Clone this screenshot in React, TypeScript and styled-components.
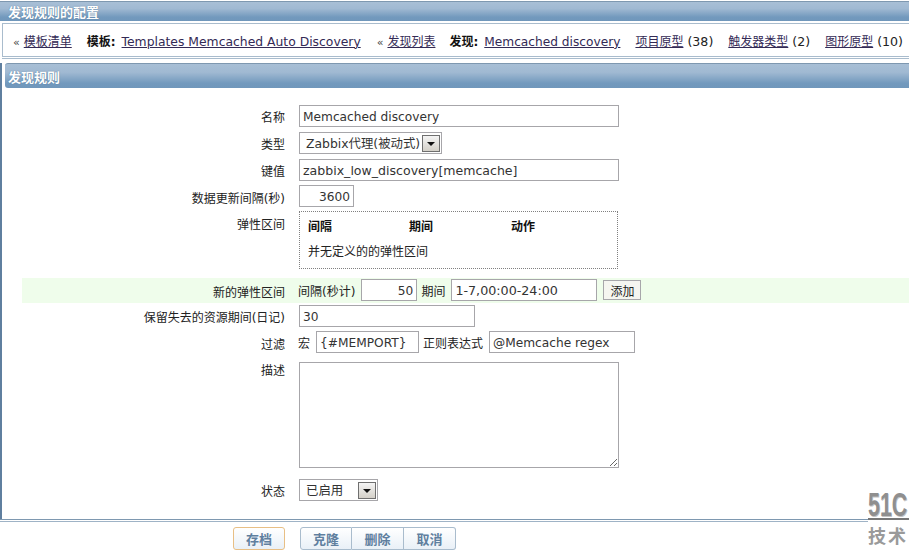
import styled, { createGlobalStyle } from 'styled-components';

const GlobalStyle = createGlobalStyle`
    html, body {
        margin: 0;
        padding: 0;
        background: #ffffff;
    }
    body {
        width: 909px;
        height: 555px;
        overflow: hidden;
        font-family: "DejaVu Sans", "Noto Sans CJK SC", sans-serif;
        font-size: 12px;
        color: #222222;
    }
`;

const Page = styled.div`
    position: relative;
    width: 909px;
    height: 555px;
    padding-top: 1px;
    box-sizing: border-box;
    overflow: hidden;
`;

const HeaderBar = styled.div<{ $height: number; $inset: number; $pad: number }>`
    height: ${(p) => p.$height}px;
    margin-left: ${(p) => p.$inset}px;
    padding-left: ${(p) => p.$pad}px;
    box-sizing: border-box;
    display: flex;
    align-items: center;
    font-family: "Noto Sans CJK SC", sans-serif;
    font-weight: 700;
    font-size: 13px;
    color: #ffffff;
    text-shadow: 0 0 1px #45688a;
    background: linear-gradient(to bottom, #a8bfd6 0%, #a0b9d2 35%, #7299bd 80%, #7097bb 100%);
    border-top: 1px solid #7e98b0;
    border-radius: ${(p) => (p.$inset ? '3px 0 0 3px' : '0')};
`;

const Nav = styled.div`
    margin: 2px 0 0 2px;
    height: 34px;
    box-sizing: border-box;
    display: flex;
    align-items: center;
    padding: 0 0 0 10px;
    border: 1px solid #a9bccd;
    border-right: none;
    white-space: nowrap;
`;

const NavItem = styled.span<{ $left: number }>`
    margin-left: ${(p) => p.$left}px;
    display: inline-flex;
    align-items: baseline;
    gap: 4px;
    font-size: 12.6px;
    color: #222222;
`;

const Crumb = styled.span`
    font-size: 11px;
    color: #444444;
`;

const NavLink = styled.a<{ $size?: number }>`
    color: #332a55;
    text-decoration: underline;
    font-size: ${(p) => p.$size ?? 12}px;
`;

const Strong = styled.b`
    font-weight: 700;
    font-size: 12px;
    color: #111111;
    padding-right: 2px;
`;

const Divider = styled.div`
    margin: 1px 0 4px 2px;
    height: 0;
    border-top: 1px solid #a9bccd;
`;

const Section = styled.div`
    border-left: 2px solid #5f7f9f;
    height: 457px;
    padding-left: 2px;
    box-sizing: border-box;
`;

const Form = styled.div`
    padding: 17px 0 0 18px;
`;

const Row = styled.div<{ $top: number; $green?: boolean }>`
    display: grid;
    grid-template-columns: 263px 1fr;
    column-gap: 14px;
    margin-top: ${(p) => p.$top}px;
    background: ${(p) => (p.$green ? '#effdeb' : 'transparent')};
    padding: ${(p) => (p.$green ? '1px 0 2px' : '0')};
`;

const Label = styled.div<{ $pad?: number }>`
    text-align: right;
    font-size: 12px;
    line-height: 16px;
    padding-top: ${(p) => p.$pad ?? 5}px;
    color: #222222;
`;

const Field = styled.div`
    display: flex;
    align-items: center;
    height: 22px;
    font-size: 12px;
    color: #222222;
`;

const Input = styled.input<{ $width: number; $right?: boolean; $size?: number }>`
    width: ${(p) => p.$width}px;
    height: 22px;
    box-sizing: border-box;
    border: 1px solid #a7a6aa;
    padding: 1px 3px 0;
    margin: 0;
    font-family: "DejaVu Sans", "Noto Sans CJK SC", sans-serif;
    font-size: ${(p) => p.$size ?? 12.2}px;
    color: #333333;
    background: #ffffff;
    text-align: ${(p) => (p.$right ? 'right' : 'left')};
    outline: none;
`;

const Select = styled.div<{ $width: number }>`
    width: ${(p) => p.$width}px;
    height: 22px;
    box-sizing: border-box;
    border: 1px solid #a7a6aa;
    display: flex;
    align-items: center;
    justify-content: space-between;
    padding: 0 1px 0 6px;
    font-size: 12.4px;
    color: #333333;
    white-space: nowrap;
`;

const SelectArrow = styled.span`
    width: 18px;
    height: 17px;
    box-sizing: border-box;
    border: 1px solid #6f6f6f;
    background: linear-gradient(to bottom, #f4f4f4, #d4d0c8);
    display: flex;
    align-items: center;
    justify-content: center;
    flex-shrink: 0;

    &::after {
        content: '';
        margin-top: 2px;
        border-left: 4px solid transparent;
        border-right: 4px solid transparent;
        border-top: 4px solid #111111;
    }
`;

const PeriodBox = styled.div`
    width: 319px;
    height: 58px;
    box-sizing: border-box;
    border: 1px dotted #808080;
    padding: 7px 8px 0;
`;

const PeriodHead = styled.div`
    display: grid;
    grid-template-columns: 101px 102px 1fr;
    font-weight: 700;
    font-size: 12px;
    line-height: 16px;
    color: #111111;
`;

const PeriodEmpty = styled.div`
    margin-top: 9px;
    font-size: 12px;
    line-height: 16px;
`;

const Text = styled.span<{ $left?: number; $right?: number }>`
    margin-left: ${(p) => p.$left ?? 0}px;
    margin-right: ${(p) => p.$right ?? 0}px;
    white-space: nowrap;
`;

const SmallButton = styled.button`
    margin-left: 6px;
    width: 38px;
    height: 20px;
    padding: 0;
    box-sizing: border-box;
    border: 1px solid #a7a6aa;
    background: #f5f5f0;
    font-family: "Noto Sans CJK SC", sans-serif;
    font-size: 12px;
    color: #222222;
`;

const TextArea = styled.textarea`
    display: block;
    width: 320px;
    height: 106px;
    box-sizing: border-box;
    border: 1px solid #a7a6aa;
    margin: 0;
    padding: 2px;
    outline: none;
`;

const Footer = styled.div`
    margin: 18px 0 0 -4px;
    border-top: 1px solid #7e98b0;
    border-bottom: 1px solid #9fb3c6;
    height: 3px;
    box-sizing: border-box;
`;

const Actions = styled.div`
    display: flex;
    padding: 7px 0 0 233px;
`;

const ActionGroup = styled.div`
    display: flex;
    margin-left: 15px;
`;

const ActionButton = styled.button<{ $accent?: boolean; $pos?: 'first' | 'mid' | 'last' }>`
    width: 52px;
    height: 23px;
    padding: 0;
    box-sizing: border-box;
    font-family: "Noto Sans CJK SC", sans-serif;
    font-weight: 700;
    font-size: 13px;
    color: #5f7f9f;
    background: linear-gradient(to bottom, #ffffff, #e9f0f7);
    border: 1px solid ${(p) => (p.$accent ? '#e8bf85' : '#a9bccd')};
    border-left-width: ${(p) => (p.$pos === 'mid' || p.$pos === 'last' ? 0 : 1)}px;
    border-radius: ${(p) =>
        p.$pos === 'first' ? '3px 0 0 3px' : p.$pos === 'last' ? '0 3px 3px 0' : p.$pos === 'mid' ? '0' : '3px'};
`;

const Watermark = styled.div`
    position: absolute;
    left: 868px;
    top: 489px;
    width: 41px;
    white-space: nowrap;
    background: #ffffff;
    color: #9a9a9a;
    font-weight: 700;
`;

const WatermarkTop = styled.div`
    height: 29px;
    border-bottom: 2px solid #777777;
`;

const WatermarkGlyphs = styled.span`
    display: block;
    width: 70px;
    font-family: "Liberation Sans", sans-serif;
    font-size: 34px;
    line-height: 30px;
    color: #8f8f8f;
    text-shadow: 1px 1px 0 #c4c4c4;
    transform: scaleX(0.63);
    transform-origin: left center;
`;

const WatermarkBottom = styled.div`
    font-family: "Noto Sans CJK SC", sans-serif;
    font-size: 18px;
    line-height: 24px;
    letter-spacing: 2px;
    padding-top: 3px;
`;

export default function App() {
    return (
        <Page>
            <GlobalStyle />
            <HeaderBar $height={20} $inset={0} $pad={8}>发现规则的配置</HeaderBar>
            <Nav>
                <NavItem $left={0}>
                    <Crumb>«</Crumb>
                    <NavLink>模板清单</NavLink>
                </NavItem>
                <NavItem $left={15}>
                    <Strong>模板:</Strong>
                    <NavLink $size={12.36}>Templates Memcached Auto Discovery</NavLink>
                </NavItem>
                <NavItem $left={16}>
                    <Crumb>«</Crumb>
                    <NavLink>发现列表</NavLink>
                </NavItem>
                <NavItem $left={14}>
                    <Strong>发现:</Strong>
                    <NavLink $size={12.2}>Memcached discovery</NavLink>
                </NavItem>
                <NavItem $left={15}>
                    <NavLink>项目原型</NavLink> (38)
                </NavItem>
                <NavItem $left={15}>
                    <NavLink>触发器类型</NavLink> (2)
                </NavItem>
                <NavItem $left={15}>
                    <NavLink>图形原型</NavLink> (10)
                </NavItem>
            </Nav>
            <Divider />
            <Section>
                <HeaderBar $height={25} $inset={1} $pad={3}>发现规则</HeaderBar>
                <Form>
                    <Row $top={0}>
                        <Label>名称</Label>
                        <Field><Input $width={320} defaultValue="Memcached discovery" /></Field>
                    </Row>
                    <Row $top={5}>
                        <Label>类型</Label>
                        <Field>
                            <Select $width={143}>Zabbix代理(被动式)<SelectArrow /></Select>
                        </Field>
                    </Row>
                    <Row $top={5}>
                        <Label>键值</Label>
                        <Field><Input $width={320} $size={12.55} defaultValue="zabbix_low_discovery[memcache]" /></Field>
                    </Row>
                    <Row $top={4}>
                        <Label $pad={6}>数据更新间隔(秒)</Label>
                        <Field><Input $width={55} $right defaultValue="3600" /></Field>
                    </Row>
                    <Row $top={4}>
                        <Label $pad={6}>弹性区间</Label>
                        <PeriodBox>
                            <PeriodHead>
                                <span>间隔</span>
                                <span>期间</span>
                                <span>动作</span>
                            </PeriodHead>
                            <PeriodEmpty>并无定义的的弹性区间</PeriodEmpty>
                        </PeriodBox>
                    </Row>
                    <Row $top={9} $green>
                        <Label $pad={6}>新的弹性区间</Label>
                        <Field>
                            <Text $left={-1} $right={6}>间隔(秒计)</Text>
                            <Input $width={56} $right defaultValue="50" />
                            <Text $left={4} $right={6}>期间</Text>
                            <Input $width={146} $size={12.7} defaultValue="1-7,00:00-24:00" />
                            <SmallButton>添加</SmallButton>
                        </Field>
                    </Row>
                    <Row $top={2}>
                        <Label>保留失去的资源期间(日记)</Label>
                        <Field><Input $width={176} defaultValue="30" /></Field>
                    </Row>
                    <Row $top={4}>
                        <Label $pad={6}>过滤</Label>
                        <Field>
                            <Text $left={-1} $right={6}>宏</Text>
                            <Input $width={103} defaultValue="{#MEMPORT}" />
                            <Text $left={4} $right={6}>正则表达式</Text>
                            <Input $width={146} defaultValue="@Memcache regex" />
                        </Field>
                    </Row>
                    <Row $top={9}>
                        <Label $pad={1}>描述</Label>
                        <TextArea />
                    </Row>
                    <Row $top={11}>
                        <Label>状态</Label>
                        <Field>
                            <Select $width={79}>已启用<SelectArrow /></Select>
                        </Field>
                    </Row>
                </Form>
                <Footer />
            </Section>
            <Actions>
                <ActionButton $accent>存档</ActionButton>
                <ActionGroup>
                    <ActionButton $pos="first">克隆</ActionButton>
                    <ActionButton $pos="mid">删除</ActionButton>
                    <ActionButton $pos="last">取消</ActionButton>
                </ActionGroup>
            </Actions>
            <Watermark>
                <WatermarkTop><WatermarkGlyphs>51C</WatermarkGlyphs></WatermarkTop>
                <WatermarkBottom>技术</WatermarkBottom>
            </Watermark>
        </Page>
    );
}
